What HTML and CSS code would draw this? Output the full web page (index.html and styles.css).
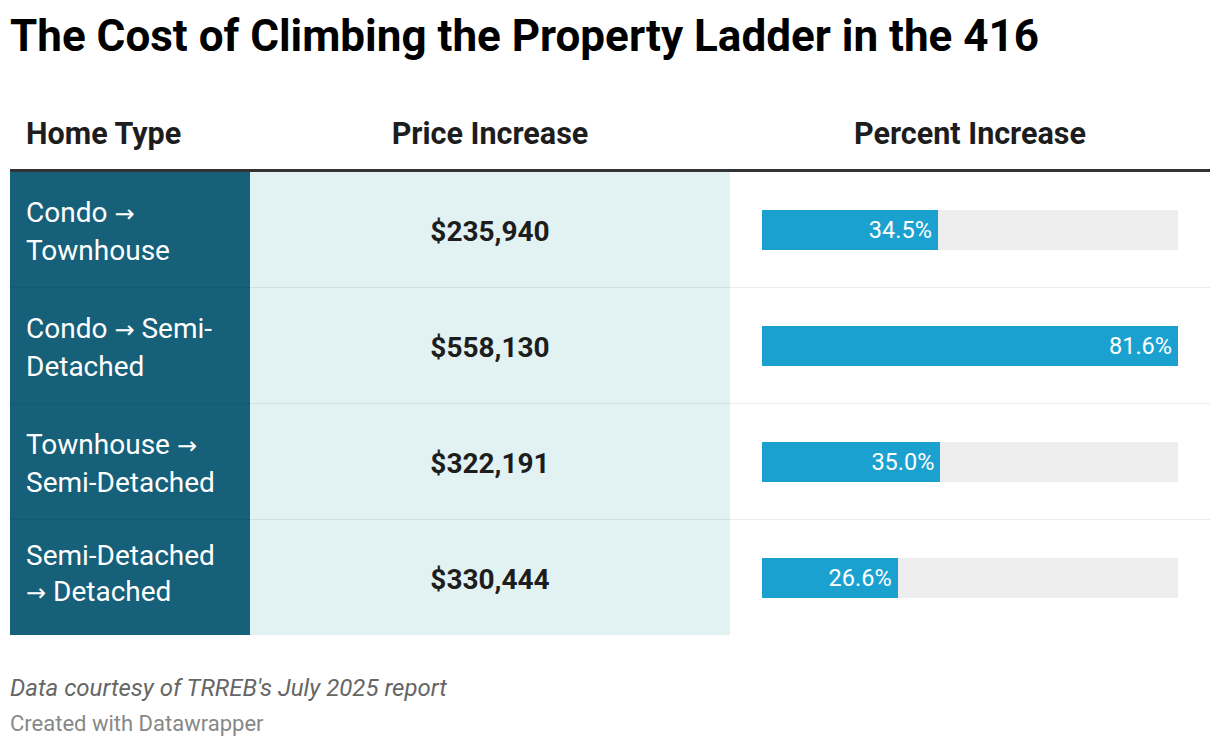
FILE: index.html
```html
<!DOCTYPE html>
<html lang="en">
<head>
<meta charset="utf-8">
<title>The Cost of Climbing the Property Ladder in the 416</title>
<link rel="stylesheet" href="styles.css">
</head>
<body>
<div class="chart">
  <h1 class="title">The Cost of Climbing the Property Ladder in the 416</h1>
  <div class="table">
    <div class="row head">
      <div class="cell c1">Home Type</div>
      <div class="cell c2">Price Increase</div>
      <div class="cell c3">Percent Increase</div>
    </div>
    <div class="row">
      <div class="cell c1"><span>Condo <span class="arr">→</span><br>Townhouse</span></div>
      <div class="cell c2">$235,940</div>
      <div class="cell c3"><div class="bar"><div class="fill" style="width:42.28%"><span>34.5%</span></div></div></div>
    </div>
    <div class="row">
      <div class="cell c1"><span>Condo <span class="arr">→</span> Semi-<br>Detached</span></div>
      <div class="cell c2">$558,130</div>
      <div class="cell c3"><div class="bar"><div class="fill" style="width:100%"><span>81.6%</span></div></div></div>
    </div>
    <div class="row">
      <div class="cell c1"><span>Townhouse <span class="arr">→</span><br>Semi-Detached</span></div>
      <div class="cell c2">$322,191</div>
      <div class="cell c3"><div class="bar"><div class="fill" style="width:42.89%"><span>35.0%</span></div></div></div>
    </div>
    <div class="row last">
      <div class="cell c1"><span>Semi-Detached<br><span class="arr">→</span> Detached</span></div>
      <div class="cell c2">$330,444</div>
      <div class="cell c3"><div class="bar"><div class="fill" style="width:32.6%"><span>26.6%</span></div></div></div>
    </div>
  </div>
  <div class="footer">
    <p class="notes">Data courtesy of TRREB's July 2025 report</p>
    <p class="credit">Created with Datawrapper</p>
  </div>
</div>
</body>
</html>
```

FILE: styles.css
```css
html, body {
  margin: 0;
  padding: 0;
  background: #ffffff;
}

body {
  font-family: Roboto, "Liberation Sans", Arial, sans-serif;
  color: #1d1d1d;
}

.chart {
  width: 1200px;
  padding: 10px 10px 0 10px;
}

.title {
  margin: 0;
  font-size: 44px;
  line-height: 52px;
  font-weight: 700;
  color: #000000;
}

.table {
  display: flex;
  flex-direction: column;
}

.row {
  display: grid;
  grid-template-columns: 240px 480px 480px;
  height: 116px;
}

.row .cell {
  border-bottom: 1px solid rgba(0, 0, 0, 0.075);
}

.row.last {
  height: 115px;
}

.row.last .cell {
  border-bottom: none;
}

.row.head {
  height: auto;
  border-bottom: 3px solid #333333;
}

.row.head .cell {
  padding: 54px 16px 17px 16px;
  font-size: 30.5px;
  line-height: 36px;
  font-weight: 700;
  color: #1d1d1d;
  background: transparent;
  border-bottom: none;
  display: block;
}

.head .c2,
.head .c3 {
  text-align: center;
}

.cell {
  display: flex;
  align-items: center;
}

.c1 {
  background: #176079;
  color: #ffffff;
  font-size: 28px;
  line-height: 30.8px;
  padding: 1px 16px 0 16px;
}

.arr {
  font-family: "DejaVu Sans", sans-serif;
  font-size: 24px;
  line-height: 43.5px;
}

.c2 {
  background: #e2f2f2;
  justify-content: center;
  font-size: 28px;
  font-weight: 700;
  color: #1d1d1d;
  padding-top: 4px;
}

.c3 {
  padding: 0 32px;
}

.bar {
  width: 100%;
  height: 40px;
  background: #ededed;
}

.fill {
  height: 100%;
  background: #1ba1cf;
  display: flex;
  align-items: center;
  justify-content: flex-end;
  box-sizing: border-box;
  padding-right: 6px;
}

.fill span {
  color: #ffffff;
  font-size: 23.5px;
  line-height: 40px;
}

.footer {
  padding-top: 37px;
}

.footer p {
  margin: 0;
}

.notes {
  font-style: italic;
  font-size: 24px;
  line-height: 32px;
  color: #666666;
}

.credit {
  font-size: 22px;
  line-height: 30px;
  color: #888888;
  margin-top: 5px !important;
}
```
